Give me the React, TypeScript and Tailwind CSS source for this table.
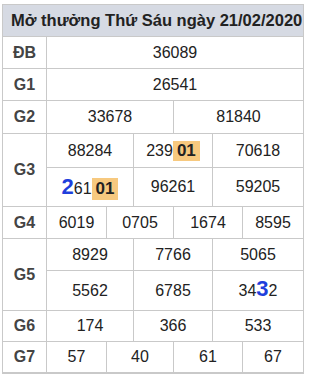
import React from "react";

const font = { fontFamily: '"Liberation Sans", Arial, sans-serif' };

function Hl({ children, tall = false }: { children: React.ReactNode; tall?: boolean }) {
  return (
    <span
      className={
        "inline-block bg-[#f7c97f] px-[4px] text-[17px] font-bold " + (tall ? "leading-[22px]" : "leading-[20px]")
      }
    >
      {children}
    </span>
  );
}

function Big({ children }: { children: React.ReactNode }) {
  return <span className="text-[22px] font-bold text-[#1f3fdc] leading-none">{children}</span>;
}

function Cell({ className = "", children }: { className?: string; children?: React.ReactNode }) {
  return (
    <div className={"bg-white flex items-center justify-center text-[16px] text-[#222] " + className}>
      {children}
    </div>
  );
}

function Label({ className = "", children }: { className?: string; children: React.ReactNode }) {
  return (
    <div className={"bg-white flex items-center justify-center text-[16px] font-bold text-[#444] " + className}>
      {children}
    </div>
  );
}

export default function App() {
  return (
    <div className="w-[310px] h-[377px] bg-white pt-[4px] pl-[2px]" style={font}>
      <div className="w-[302px] grid gap-px bg-[#c9c9c9] pt-px px-px pb-[2px] grid-cols-[43px_59px_26px_39px_38px_29px_60px] grid-rows-[31px_31px_31px_32px_33px_38px_31px_31px_39px_30px_30px]">
        <div className="col-span-7 bg-[#d6dae3] flex items-center pl-[8px] text-[16.5px] font-bold text-[#222]">
          Mở thưởng Thứ Sáu ngày 21/02/2020
        </div>

        <Label>ĐB</Label>
        <Cell className="col-span-6">36089</Cell>

        <Label>G1</Label>
        <Cell className="col-span-6">26541</Cell>

        <Label>G2</Label>
        <Cell className="col-span-3">33678</Cell>
        <Cell className="col-span-3">81840</Cell>

        <Label className="row-span-2">G3</Label>
        <Cell className="col-span-2">88284</Cell>
        <Cell className="col-span-2">
          <span className="flex items-baseline">
            <span>239</span>
            <Hl>01</Hl>
          </span>
        </Cell>
        <Cell className="col-span-2">70618</Cell>
        <Cell className="col-span-2 pt-[3px]">
          <span className="flex items-baseline">
            <Big>2</Big>
            <span>61</span>
            <Hl tall>01</Hl>
          </span>
        </Cell>
        <Cell className="col-span-2">96261</Cell>
        <Cell className="col-span-2">59205</Cell>

        <Label>G4</Label>
        <Cell>6019</Cell>
        <Cell className="col-span-2">0705</Cell>
        <Cell className="col-span-2">1674</Cell>
        <Cell>8595</Cell>

        <Label className="row-span-2">G5</Label>
        <Cell className="col-span-2">8929</Cell>
        <Cell className="col-span-2">7766</Cell>
        <Cell className="col-span-2">5065</Cell>
        <Cell className="col-span-2">5562</Cell>
        <Cell className="col-span-2">6785</Cell>
        <Cell className="col-span-2">
          <span className="flex items-baseline">
            <span>34</span>
            <Big>3</Big>
            <span>2</span>
          </span>
        </Cell>

        <Label>G6</Label>
        <Cell className="col-span-2">174</Cell>
        <Cell className="col-span-2">366</Cell>
        <Cell className="col-span-2">533</Cell>

        <Label>G7</Label>
        <Cell>57</Cell>
        <Cell className="col-span-2">40</Cell>
        <Cell className="col-span-2">61</Cell>
        <Cell>67</Cell>
      </div>
    </div>
  );
}
